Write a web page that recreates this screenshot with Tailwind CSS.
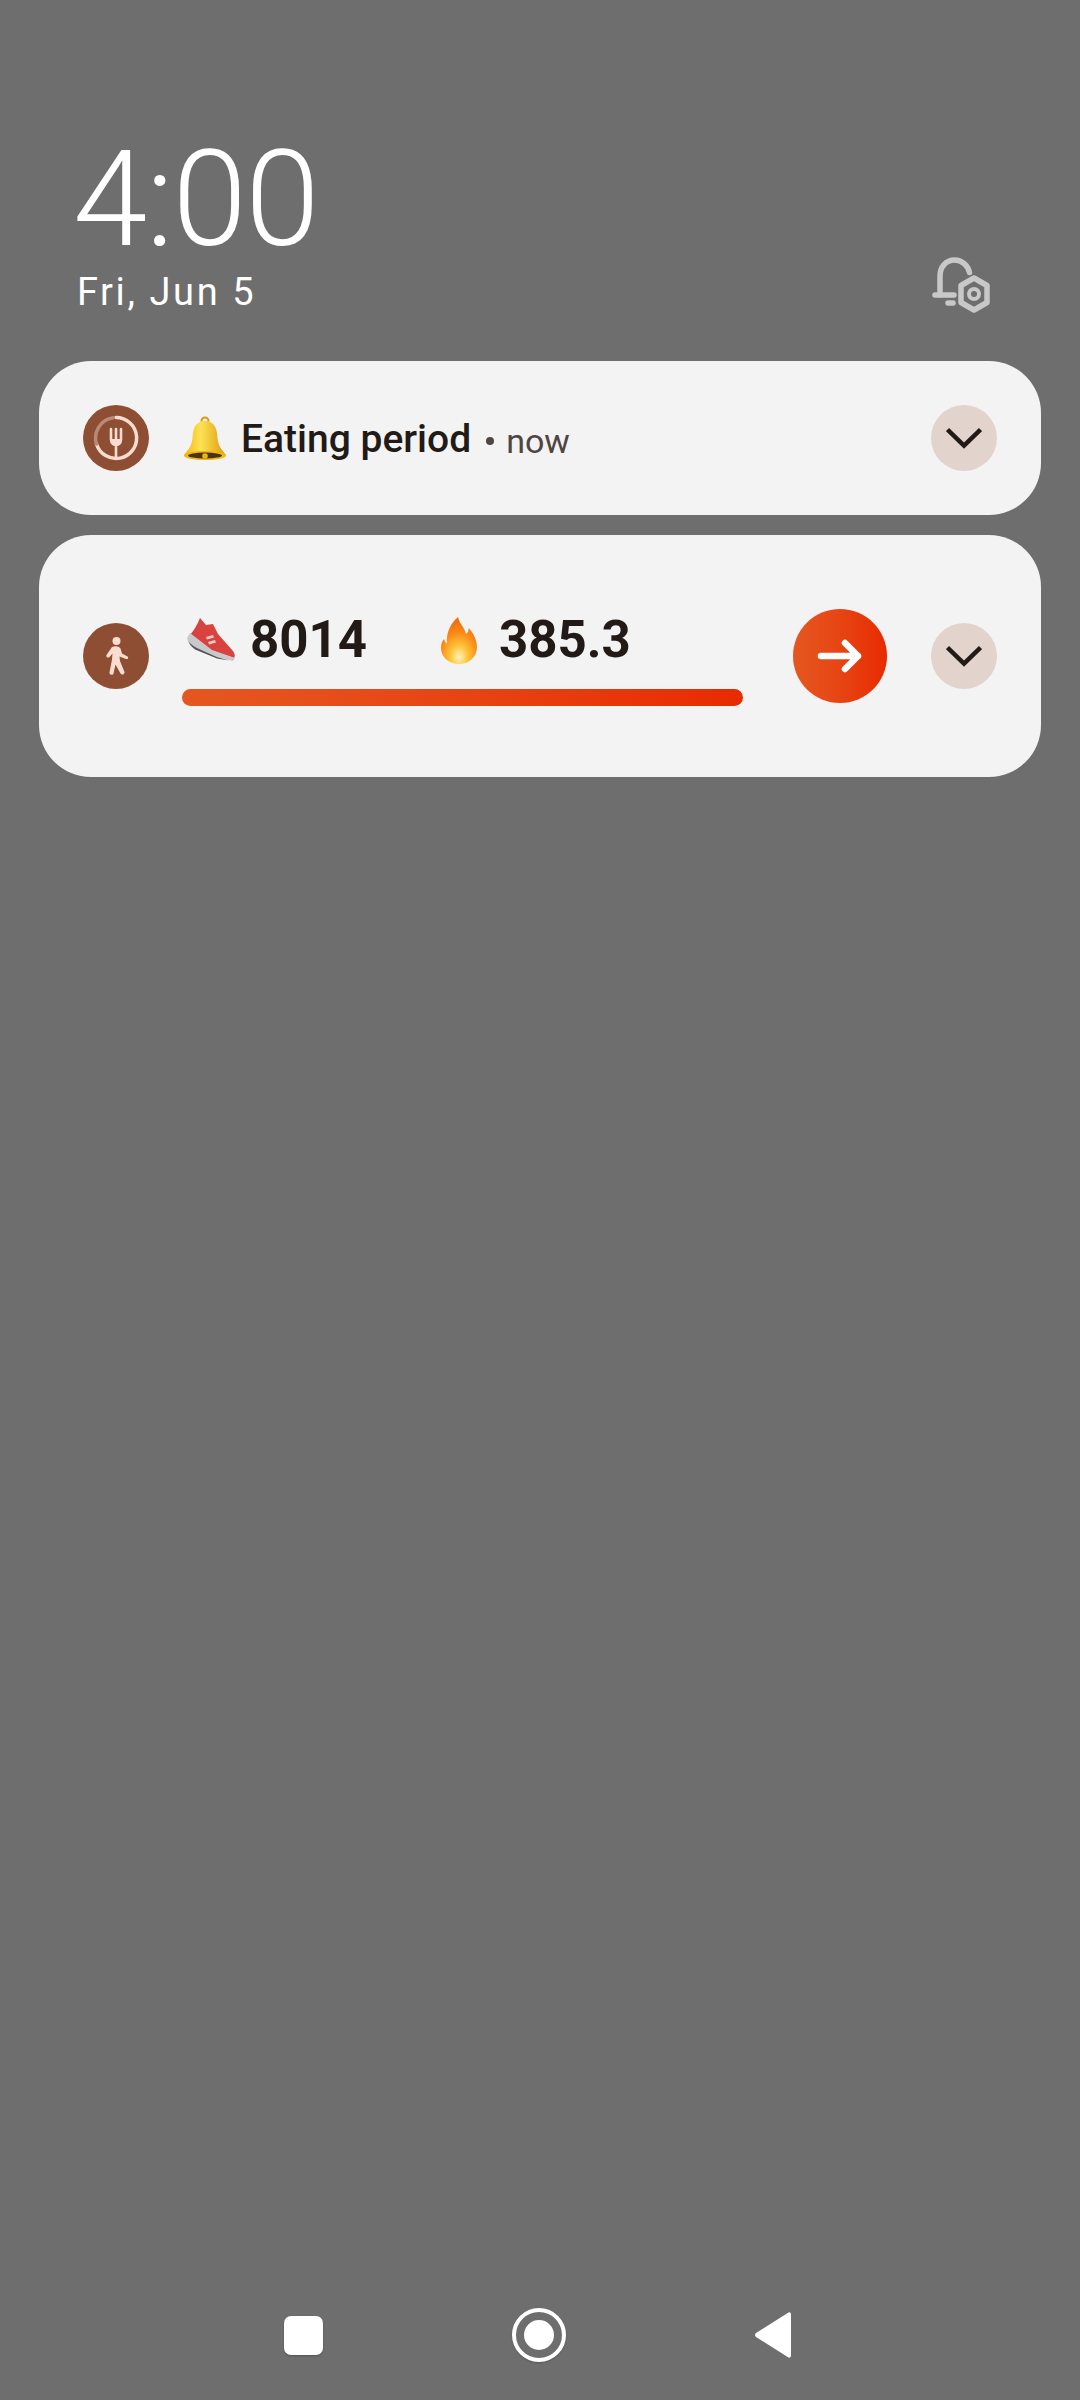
<!doctype html>
<html>
<head>
<meta charset="utf-8">
<script src="https://cdn.jsdelivr.net/npm/@tailwindcss/browser@4"></script>
</head>
<body class="m-0 bg-[#6e6e6e]">
<div class="flex h-[2400px] w-[1080px] flex-col overflow-hidden bg-[#6e6e6e] font-['Roboto',sans-serif]">
  <!-- Clock -->
  <div class="relative h-[361px] shrink-0">
    <div class="pl-[73px] pt-[135px] text-[134px] leading-[130px] font-light tracking-[-1.500px] text-white">4:00</div>
    <div class="mt-[5px] pl-[77px] text-[38px] leading-[44px] tracking-[2.600px] text-white">Fri, Jun 5</div>
    <svg class="absolute left-[932px] top-[257px]" width="60" height="56" viewBox="0 0 60 56" fill="none" stroke="#c8c8c8" stroke-width="5.5" stroke-linecap="round" stroke-linejoin="round">
      <path d="M8 38V19C8 10 14 3 22.500 3C30 3 36 8.500 37.500 15.500"/>
      <path d="M3 38H22"/>
      <path d="M16 46H21"/>
      <path d="M42 21L55 28.500V45.500L42 53L29 45.500V28.500Z"/>
      <circle cx="42" cy="37" r="5" stroke-width="4"/>
    </svg>
  </div>

  <!-- Eating period -->
  <div class="mx-[39px] flex h-[154px] shrink-0 items-center rounded-[52px] bg-[#f3f3f3] pl-[44px] pr-[44px]">
    <div class="flex h-[66px] w-[66px] shrink-0 items-center justify-center rounded-full bg-[#8e4e33]">
      <svg width="46" height="46" viewBox="0 0 46 46" fill="none" stroke-linecap="round" stroke-linejoin="round">
        <path d="M23 2.500A20.500 20.500 0 1 1 3.500 29" stroke="#f8dcd2" stroke-width="3.500"/>
        <path d="M3.500 29A20.500 20.500 0 0 1 20 2.700" stroke="#b98a76" stroke-width="3.500"/>
        <path d="M23 14V43M18 14V24C18 28 20 30 23 30C26 30 28 28 28 24V14" stroke="#f8dcd2" stroke-width="2.600"/>
        <path d="M18 24H28V28L23 31L18 28Z" fill="#f8dcd2"/>
      </svg>
    </div>
    <svg class="ml-[33px] shrink-0 translate-y-[1px]" width="46" height="46" viewBox="0 0 46 46">
      <defs>
        <linearGradient id="bell" x1="0" x2="1" y1="0" y2="0">
          <stop offset="0" stop-color="#f5b70f"/><stop offset=".4" stop-color="#fde255"/><stop offset="1" stop-color="#dd9a08"/>
        </linearGradient>
      </defs>
      <circle cx="23" cy="5" r="3.500" fill="none" stroke="#d99b10" stroke-width="2"/>
      <path d="M23 5C13 5 11 13 10.500 22C10 30 6 34 2 39L44 39C40 34 36 30 35.500 22C35 13 33 5 23 5Z" fill="url(#bell)"/>
      <ellipse cx="23" cy="39.500" rx="21" ry="4.500" fill="#f2b60f"/>
      <ellipse cx="23" cy="39.500" rx="17" ry="3" fill="#4a3413"/>
      <circle cx="23" cy="40" r="2.800" fill="#eeb21a"/>
    </svg>
    <span class="ml-[13px] translate-y-[1px] text-[39px] leading-[44px] font-medium text-[#211a17]">Eating period</span>
    <span class="ml-[15px] h-[8px] w-[8px] shrink-0 translate-y-[3px] rounded-full bg-[#4f4542]"></span>
    <span class="ml-[12px] translate-y-[3px] text-[34px] leading-[44px] text-[#4f4542]">now</span>
    <div class="ml-auto flex h-[66px] w-[66px] shrink-0 items-center justify-center rounded-full bg-[#e2d3cd]">
      <svg width="36" height="22" viewBox="0 0 36 22" fill="none" stroke="#211a17" stroke-width="4.500"><path d="M1.500 2.500L18 18.500L34.500 2.500"/></svg>
    </div>
  </div>

  <!-- Steps -->
  <div class="mx-[39px] mt-[20px] flex h-[242px] shrink-0 items-center rounded-[52px] bg-[#f3f3f3] pl-[44px] pr-[44px]">
    <div class="flex h-[66px] w-[66px] shrink-0 items-center justify-center rounded-full bg-[#8e4e33]">
      <svg width="30" height="40" viewBox="0 0 30 40" fill="#fbdcd0">
        <circle cx="15.500" cy="5" r="4"/>
        <path d="M11 11C14 9.500 18 10 19.500 12.500L21 17.500L26.500 20.500C28 21.500 26.800 23.800 25 23L18.500 20.500L19 25L23.500 36C24 38.500 20.500 39.500 19.500 37.500L14.500 28.500L12.500 37.500C12 39.500 8 39 8.500 36.500L11 23.500L11.500 17.500L8.500 21C7 22.500 4.500 21 5.500 19Z"/>
      </svg>
    </div>
    <div class="ml-[33px] w-[561px] shrink-0 pt-[3px]">
      <div class="flex h-[62px] items-center">
        <svg class="ml-[5px] shrink-0" width="48" height="44" viewBox="0 0 48 44">
          <path d="M13 0L19 7L26 6L31 16L46 33Q49 37 47 40L20 31L3 17Q9 10 13 0Z" fill="#d9433f"/>
          <path d="M3 15L0 20Q1 25 10 30L30 39L46 43L48 40L25 32Z" fill="#c9c9cc"/>
          <path d="M0.500 21Q1 25 10 30L30 39L42 42.500L30 40.500L8 31.500Q2 27 0.500 21Z" fill="#55575c"/>
          <path d="M19 19L26 17L27 19.500L20 21.500ZM21 24L28 22L29 24.500L22 26.500Z" fill="#f3c9c6"/>
        </svg>
        <span class="ml-[15px] text-[51px] leading-[62px] font-bold tracking-[0px] text-[#211a17]">8014</span>
        <svg class="ml-[73px] shrink-0" width="38" height="47" viewBox="0 0 38 47">
          <defs>
            <radialGradient id="fire" cx=".5" cy=".85" r=".8">
              <stop offset="0" stop-color="#fff3c0"/><stop offset=".3" stop-color="#ffc53a"/><stop offset=".65" stop-color="#fb8a16"/><stop offset="1" stop-color="#ef6a10"/>
            </radialGradient>
          </defs>
          <path d="M18 0C20 8 24 9 26 17C28 15.500 29 13.500 28.500 11C33 15 37 23 37 30C37 40 29 47 19 47C9 47 1 40 1 31C1 27 2 24 4 22C4.500 24 5.500 25.500 7 26.500C6 15 11 6 18 0Z" fill="url(#fire)"/>
        </svg>
        <span class="ml-[21px] text-[51px] leading-[62px] font-bold tracking-[0px] text-[#211a17]">385.3</span>
      </div>
      <div class="mt-[18px] h-[17px] rounded-full bg-gradient-to-r from-[#e55720] to-[#e82a00]"></div>
    </div>
    <div class="ml-[50px] flex h-[94px] w-[94px] shrink-0 items-center justify-center rounded-full bg-gradient-to-r from-[#e55720] to-[#e82a00]">
      <svg width="46" height="36" viewBox="0 0 46 36" fill="none" stroke="#fff" stroke-width="6.500" stroke-linecap="round" stroke-linejoin="round"><path d="M4 18H41M28 5L41 18L28 31"/></svg>
    </div>
    <div class="ml-auto flex h-[66px] w-[66px] shrink-0 items-center justify-center rounded-full bg-[#e2d3cd]">
      <svg width="36" height="22" viewBox="0 0 36 22" fill="none" stroke="#211a17" stroke-width="4.500"><path d="M1.500 2.500L18 18.500L34.500 2.500"/></svg>
    </div>
  </div>

  <!-- Navigation bar -->
  <div class="mt-auto mb-[15px] flex h-[100px] items-center pl-[284px]">
    <div class="h-[39px] w-[39px] rounded-[7px] bg-white shadow-[0_1px_2px_rgba(0,0,0,0.25)]"></div>
    <div class="ml-[189px] flex h-[54px] w-[54px] items-center justify-center rounded-full border-[4px] border-white shadow-[0_1px_2px_rgba(0,0,0,0.2)]">
      <div class="h-[30px] w-[30px] rounded-full bg-white"></div>
    </div>
    <svg class="ml-[189px]" width="36" height="46" viewBox="0 0 36 46"><path d="M33.500 0.500C35 0 36 1 36 2.500V43.500C36 45 35 46 33.500 45.500L1 25C-0.300 24 -0.300 22 1 21Z" fill="#fff"/></svg>
  </div>
</div>
</body>
</html>
